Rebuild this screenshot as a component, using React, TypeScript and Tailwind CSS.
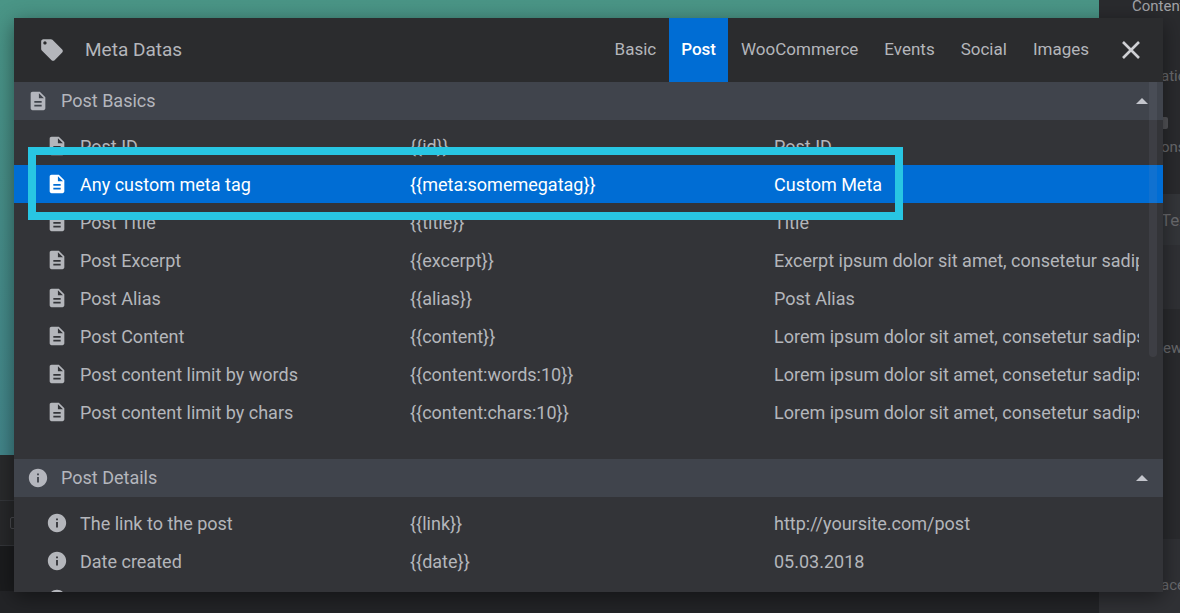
import { useState } from "react";

type IconKind = "page" | "info";
type Row = { name: string; tag: string; preview: string; active?: boolean };
type Section = { title: string; icon: IconKind; rows: Row[] };

const lorem = "Lorem ipsum dolor sit amet, consetetur sadips";

const sections: Section[] = [
  {
    title: "Post Basics",
    icon: "page",
    rows: [
      { name: "Post ID", tag: "{{id}}", preview: "Post ID" },
      { name: "Any custom meta tag", tag: "{{meta:somemegatag}}", preview: "Custom Meta", active: true },
      { name: "Post Title", tag: "{{title}}", preview: "Title" },
      { name: "Post Excerpt", tag: "{{excerpt}}", preview: "Excerpt ipsum dolor sit amet, consetetur sadip" },
      { name: "Post Alias", tag: "{{alias}}", preview: "Post Alias" },
      { name: "Post Content", tag: "{{content}}", preview: lorem },
      { name: "Post content limit by words", tag: "{{content:words:10}}", preview: lorem },
      { name: "Post content limit by chars", tag: "{{content:chars:10}}", preview: lorem },
    ],
  },
  {
    title: "Post Details",
    icon: "info",
    rows: [
      { name: "The link to the post", tag: "{{link}}", preview: "http://yoursite.com/post" },
      { name: "Date created", tag: "{{date}}", preview: "05.03.2018" },
      { name: "", tag: "", preview: "" },
    ],
  },
];

const tabs = ["Basic", "Post", "WooCommerce", "Events", "Social", "Images"];

function Icon({ kind }: { kind: IconKind }) {
  return (
    <svg viewBox="0 0 24 24" className="size-[22px] shrink-0" fill="currentColor" aria-hidden="true">
      {kind === "page" ? (
        <path d="M14 2H6c-1.1 0-2 .9-2 2v16c0 1.1.9 2 2 2h12c1.100 0 2-.9 2-2V8l-6-6zm2 16H8v-2h8v2zm0-4H8v-2h8v2zm-3-5V3.500L18.500 9H13z" />
      ) : (
        <path d="M12 2C6.480 2 2 6.480 2 12s4.480 10 10 10 10-4.480 10-10S17.520 2 12 2zm1 15h-2v-6h2v6zm0-8h-2V7h2v2z" />
      )}
    </svg>
  );
}

function MetaSection({ section }: { section: Section }) {
  const [open, setOpen] = useState(true);
  return (
    <section>
      <button
        type="button"
        aria-expanded={open}
        onClick={() => setOpen(!open)}
        className="flex h-[38px] w-full items-center gap-3 bg-[#40444c] pr-[15px] pl-[13px] text-left text-[18px] leading-6 text-[#b4b6bd]"
      >
        <Icon kind={section.icon} />
        <span className="flex-1">{section.title}</span>
        <svg viewBox="0 0 12 6" className="h-[6px] w-3" fill="#c3c5cc" aria-hidden="true">
          <path d="M0 6 6 0l6 6z" />
        </svg>
      </button>
      {open && (
        <div className="pt-[7px] pb-7">
          <table className="w-full table-fixed border-collapse text-left text-[18px]" aria-label={section.title}>
            <colgroup>
              <col className="w-[396px]" />
              <col className="w-[364px]" />
              <col />
            </colgroup>
            <tbody>
              {section.rows.map((row, i) => (
                <tr key={i} className={row.active ? "bg-[#006dd4] text-white" : "text-[#b4b6bb]"}>
                  <td className="h-[38px] p-0 pl-8">
                    <div className="flex items-center gap-3">
                      <Icon kind={section.icon} />
                      <span>{row.name}</span>
                    </div>
                  </td>
                  <td className="p-0">{row.tag}</td>
                  <td className="p-0 pr-6">
                    <div className="overflow-hidden whitespace-nowrap">{row.preview}</div>
                  </td>
                </tr>
              ))}
            </tbody>
          </table>
        </div>
      )}
    </section>
  );
}

function Backdrop() {
  return (
    <div className="flex h-full" aria-hidden="true">
      <div className="flex flex-1 flex-col">
        <div className="flex-1 bg-linear-to-b from-[#4a9586] to-[#42858a]" />
        <div className="h-[45px] bg-[#292a2c]" />
        <div className="flex h-[46px] items-center border-y border-[#34363a] bg-[#27282a] pl-[10px]">
          <div className="size-3 rounded-xs border border-[#4a4b4f]" />
        </div>
        <div className="h-[45px] bg-[#1b1c1e]" />
        <div className="h-[22px] bg-[#232427]" />
      </div>
      <div className="flex w-[81px] flex-col overflow-hidden bg-[#2a2b2e] text-[15px] leading-6 text-[#6a6b6f]">
        <div className="h-[64px] pl-[33px] leading-3 text-[#a2a3a7]">Content</div>
        <div className="h-[53px] pl-[62px]">ation</div>
        <div className="h-[18px] pl-[61px]">
          <div className="h-3 w-2 rounded-xs bg-[#55565a]" />
        </div>
        <div className="h-[59px] pl-[62px]">ons</div>
        <div className="h-[51px] bg-[#34363a] pt-[14px] pl-[62px] text-[17px]">Text</div>
        <div className="h-16 bg-[#303135]" />
        <div className="h-[230px] pt-[27px] pl-16">ew</div>
        <div className="flex-1 bg-[#303135] pt-[34px] pl-[62px]">ace</div>
      </div>
    </div>
  );
}

export default function App() {
  const [tab, setTab] = useState("Post");
  return (
    <div className="relative h-screen overflow-hidden font-[Roboto,sans-serif]">
      <Backdrop />
      <div
        role="dialog"
        aria-label="Meta Datas"
        className="absolute top-[18px] right-[17px] bottom-[21px] left-[14px] flex flex-col bg-[#333438] shadow-[0_5px_20px_rgba(0,0,0,0.45)]"
      >
        <header className="flex h-16 shrink-0 items-stretch bg-[#2b2c2e] text-[#b4b6bb]">
          <div className="flex flex-1 items-center gap-5 pl-[25px]">
            <svg viewBox="0 0 24 24" className="size-[26px]" fill="currentColor" aria-hidden="true">
              <path d="M21.410 11.580l-9-9C12.050 2.220 11.550 2 11 2H4c-1.100 0-2 .9-2 2v7c0 .550.220 1.050.590 1.420l9 9c.360.360.860.580 1.410.580s1.050-.220 1.410-.590l7-7c.370-.360.590-.860.590-1.410s-.230-1.060-.590-1.420zM5.500 7C4.670 7 4 6.330 4 5.500S4.670 4 5.500 4 7 4.670 7 5.500 6.330 7 5.500 7z" />
            </svg>
            <h1 className="text-[19px]">Meta Datas</h1>
          </div>
          <nav className="flex text-[17px]">
            {tabs.map((t) => (
              <button
                key={t}
                type="button"
                aria-pressed={t === tab}
                onClick={() => setTab(t)}
                className={t === tab ? "bg-[#006dd4] px-3 font-medium text-white" : "px-[13px]"}
              >
                {t}
              </button>
            ))}
          </nav>
          <button type="button" aria-label="Close" className="mr-[23px] ml-5 text-[#cfd0d4]">
            <svg viewBox="0 0 18 18" className="size-[18px]" fill="none" stroke="currentColor" strokeWidth="2.600" aria-hidden="true">
              <path d="M1 1l16 16M17 1L1 17" />
            </svg>
          </button>
        </header>
        <div className="relative flex-1 overflow-hidden">
          {sections.map((s) => (
            <MetaSection key={s.title} section={s} />
          ))}
          <div className="absolute top-0 right-[6px] h-[275px] w-2 rounded-b-sm bg-[#a0a0b0]/10" />
          <div className="pointer-events-none absolute top-[65px] left-[14px] h-[73px] w-[875px] border-8 border-[#28c6e3]" />
        </div>
      </div>
    </div>
  );
}
